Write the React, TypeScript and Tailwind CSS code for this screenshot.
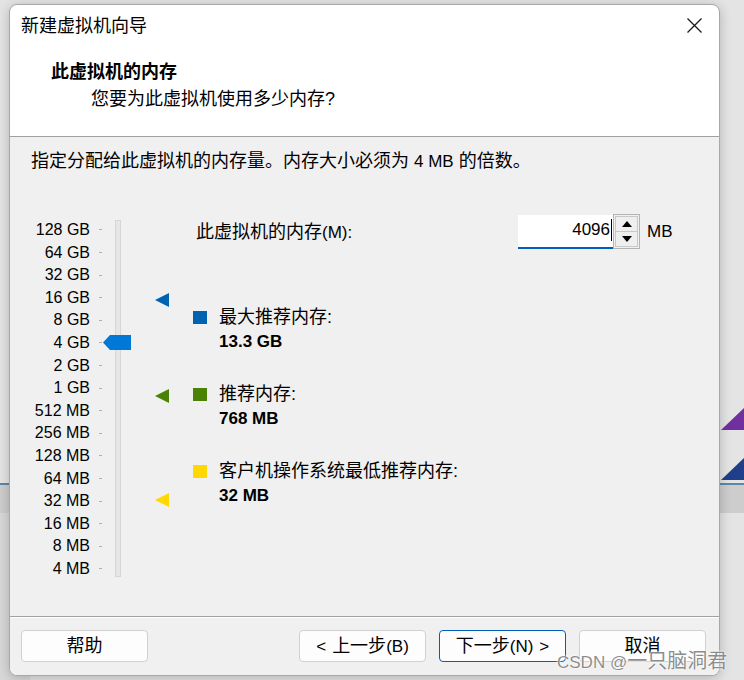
import React from "react";

const levels = [
  "128 GB", "64 GB", "32 GB", "16 GB", "8 GB", "4 GB", "2 GB", "1 GB",
  "512 MB", "256 MB", "128 MB", "64 MB", "32 MB", "16 MB", "8 MB", "4 MB",
];

const markers = [
  { label: "最大推荐内存:", value: "13.3 GB", color: "bg-[#0063b1]" },
  { label: "推荐内存:", value: "768 MB", color: "bg-[#498205]" },
  { label: "客户机操作系统最低推荐内存:", value: "32 MB", color: "bg-[#ffd800]" },
];

function Marker({ fill, top }: { fill: string; top: string }) {
  return (
    <svg width="14" height="14" viewBox="0 0 14 14" className={`absolute left-[145px] ${top}`}>
      <polygon points="0,7 14,0 14,14" fill={fill} />
    </svg>
  );
}

function Slider() {
  return (
    <div className="relative flex w-[183px] shrink-0">
      <div className="flex w-[92px] flex-col pt-[4.7px]">
        {levels.map((l) => (
          <div key={l} className="flex h-[22.6px] items-center justify-end text-[16px] leading-none text-black">
            <span>{l}</span>
            <span className="ml-[9px] h-px w-[3px] bg-[#b0b0b0]" />
          </div>
        ))}
      </div>
      <div className="ml-[13px] mt-[6px] h-[357px] w-[6px] border border-[#d6d6d6] bg-[#e6e6e6]" />

      {/* thumb */}
      <svg width="28" height="15" viewBox="0 0 28 15" className="absolute left-[93px] top-[121px]">
        <polygon points="0,7.5 7,0 28,0 28,15 7,15" fill="#0078d7" />
      </svg>

      <Marker fill="#0063b1" top="top-[79px]" />
      <Marker fill="#498205" top="top-[175px]" />
      <Marker fill="#ffd800" top="top-[279px]" />
    </div>
  );
}

function Spinner() {
  return (
    <div className="flex h-[35px] w-[27px] flex-col border border-[#b4b4b4] bg-[#f0f0f0] p-px">
      <div className="flex flex-1 items-center justify-center border border-[#c8c8c8] bg-[#efefef]">
        <svg width="10" height="6" viewBox="0 0 10 6">
          <polygon points="0,6 5,0 10,6" fill="#000" />
        </svg>
      </div>
      <div className="flex flex-1 items-center justify-center border border-t-0 border-[#c8c8c8] bg-[#efefef]">
        <svg width="10" height="6" viewBox="0 0 10 6">
          <polygon points="0,0 10,0 5,6" fill="#000" />
        </svg>
      </div>
    </div>
  );
}

function Button({ children, primary }: { children: React.ReactNode; primary?: boolean }) {
  return (
    <div
      className={
        "flex h-[32px] w-[127px] items-center justify-center rounded-[4px] bg-[#fdfdfd] text-[18px] leading-none text-black " +
        (primary ? "border border-[#005fb8]" : "border border-[#d0d0d0]")
      }
    >
      {children}
    </div>
  );
}

export default function App() {
  return (
    <div className="relative h-[680px] w-[744px] overflow-hidden bg-[#e4e4e4] font-['Liberation_Sans','Noto_Sans_CJK_SC',sans-serif]">
      {/* desktop behind the window */}
      <div className="absolute left-0 right-0 top-[483px] h-[2px] bg-[#5d87a6]" />
      <div className="absolute left-0 right-0 top-[485px] h-[28px] bg-[#cdcdcd]" />
      <div className="absolute bottom-0 left-0 top-[513px] w-[30px] bg-[#d8d8d8]" />
      <svg width="24" height="80" viewBox="0 0 24 80" className="absolute left-[721px] top-[406px]">
        <polygon points="0,24 23,2 23,24" fill="#7030a0" />
        <polygon points="0,74 23,52 23,74" fill="#1f3f8a" />
      </svg>

      <div className="relative pl-[9px] pt-[4px]">
        <div className="flex h-[672px] w-[711px] flex-col overflow-hidden rounded-[8px] border border-[#a8a8a8] bg-white shadow-[0_2px_12px_rgba(0,0,0,0.22)]">
          {/* title bar */}
          <div className="flex h-[41px] shrink-0 items-center justify-between pl-[11px] pr-[17px]">
            <span className="text-[18px] leading-none text-black">新建虚拟机向导</span>
            <svg width="15" height="15" viewBox="0 0 15 15">
              <path d="M0.5 0.5L14.5 14.5M14.5 0.5L0.5 14.5" stroke="#1a1a1a" strokeWidth="1.3" />
            </svg>
          </div>

          {/* header */}
          <div className="flex h-[90px] shrink-0 flex-col pt-[14px]">
            <div className="pl-[41px] text-[18px] font-bold leading-[24px] text-black">此虚拟机的内存</div>
            <div className="mt-[3px] pl-[81px] text-[18px] leading-[24px] text-black">您要为此虚拟机使用多少内存?</div>
          </div>
          <div className="h-px shrink-0 bg-[#a0a0a0]" />

          {/* body */}
          <div className="flex h-[479px] shrink-0 flex-col bg-[#f0f0f0] pt-[12px]">
            <div className="pl-[21px] text-[18px] leading-[24px] text-black">
              指定分配给此虚拟机的内存量。内存大小必须为 <span className="text-[17px]">4 MB</span> 的倍数。
            </div>

            <div className="mt-[40px] flex">
              <Slider />
              <div className="flex flex-col">
                <div className="flex h-[35px] items-center">
                  <span className="ml-[3px] w-[322px] text-[18px] leading-none text-black">
                    此虚拟机的内存<span className="text-[17px]">(M):</span>
                  </span>
                  <div className="mt-[1px] flex h-[34px] w-[95px] items-center justify-end border-b-2 border-[#005fb8] bg-white pb-[3px] pr-px">
                    <span className="text-[17px] leading-none text-black">4096</span>
                    <span className="ml-px h-[22px] w-px bg-black" />
                  </div>
                  <Spinner />
                  <span className="ml-[7px] text-[17px] leading-none text-black">MB</span>
                </div>

                <div className="mt-[56px] flex flex-col gap-[28px]">
                  {markers.map((m) => (
                    <div key={m.label} className="flex items-start">
                      <span className={`mt-[6px] h-[13px] w-[14px] ${m.color}`} />
                      <div className="ml-[12px] flex flex-col">
                        <span className="h-[24px] text-[18px] leading-[24px] text-black">{m.label}</span>
                        <span className="mt-px h-[24px] text-[17px] font-bold leading-[24px] text-black">{m.value}</span>
                      </div>
                    </div>
                  ))}
                </div>
              </div>
            </div>
          </div>
          <div className="h-px shrink-0 bg-[#a0a0a0]" />

          {/* footer */}
          <div className="flex flex-1 items-start justify-between border-t border-white bg-[#f0f0f0] pl-[11px] pr-[13px] pt-[12px]">
            <Button>帮助</Button>
            <div className="flex gap-[13px]">
              <Button>
                <span className="text-[17px]">&lt;</span>
                <span className="ml-[6px]">上一步</span>
                <span className="text-[17px]">(B)</span>
              </Button>
              <Button primary>
                <span>下一步</span>
                <span className="text-[17px]">(N)</span>
                <span className="ml-[6px] text-[17px]">&gt;</span>
              </Button>
              <Button>取消</Button>
            </div>
          </div>
        </div>
      </div>

      {/* watermark */}
      <div className="absolute left-[557px] top-[649px] whitespace-nowrap leading-[24px] text-[rgba(120,120,120,0.85)] [text-shadow:0_0_2px_#fff,0_0_2px_#fff]">
        <span className="text-[17px]">CSDN @</span>
        <span className="text-[20px]">一只脑洞君</span>
      </div>
    </div>
  );
}
